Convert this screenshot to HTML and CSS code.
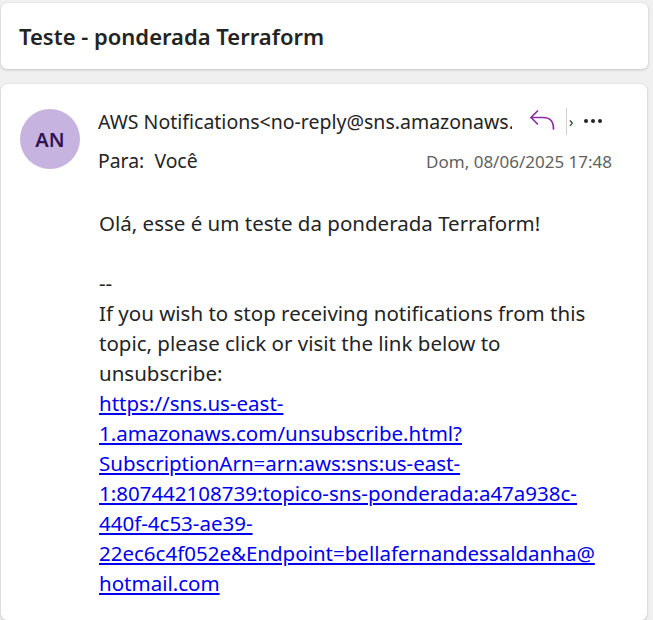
FILE: index.html
```html
<!DOCTYPE html>
<html lang="pt">
<head>
<meta charset="utf-8">
<link rel="stylesheet" href="styles.css">
</head>
<body>
<div class="page">
  <header class="subject-card">
    <h1 class="subject">Teste - ponderada Terraform</h1>
  </header>
  <article class="mail-card">
    <div class="mail-head">
      <div class="avatar">AN</div>
      <div class="meta">
        <div class="from-row">
          <div class="from">AWS Notifications&lt;no-reply@sns.amazonaws.com&gt;</div>
          <div class="actions">
            <button class="icon-btn reply" aria-label="Responder">
              <svg width="28" height="28" viewBox="0 0 28 28" fill="none" stroke="#8a2da5" stroke-width="1.7" stroke-linecap="round" stroke-linejoin="round"><path d="M9.5 4 L3 10.5 L9.5 17"/><path d="M3 10.5 H15 C22 10.5 25.5 14 25.5 22"/></svg>
            </button>
            <span class="divider"></span>
            <span class="chev">&rsaquo;</span>
            <button class="icon-btn more" aria-label="Mais">
              <svg width="20" height="6" viewBox="0 0 20 6" fill="#242424"><circle cx="3" cy="3" r="2"/><circle cx="10" cy="3" r="2"/><circle cx="17" cy="3" r="2"/></svg>
            </button>
          </div>
        </div>
        <div class="to-row">
          <span class="to">Para:&nbsp; Você</span>
          <span class="date">Dom, 08/06/2025 17:48</span>
        </div>
      </div>
    </div>
    <div class="mail-body">
      <p class="greeting">Olá, esse é um teste da ponderada Terraform!</p>
      <p class="footer-text">--<br>If you wish to stop receiving notifications from this topic, please click or visit the link below to unsubscribe:<br><a href="#">https://sns.us-east-1.amazonaws.com/unsubscribe.html?SubscriptionArn=arn:aws:sns:us-east-1:807442108739:topico-sns-ponderada:a47a938c-440f-4c53-ae39-22ec6c4f052e&amp;Endpoint=bellafernandessaldanha@<wbr>hotmail.com</a></p>
    </div>
  </article>
</div>
</body>
</html>
```
FILE: styles.css
```css
html, body {
  margin: 0;
  padding: 0;
  background: #f0f0f0;
}
body {
  font-family: "Noto Sans", "Open Sans", sans-serif;
  color: #242424;
  overflow: hidden;
  height: 620px;
}
.page {
  padding: 3px 5px 0 1px;
  display: flex;
  flex-direction: column;
  gap: 15px;
  height: 617px;
}
.subject-card {
  background: #fff;
  border-radius: 6px;
  box-shadow: 0 1px 3px rgba(0,0,0,0.18), 0 0 1px rgba(0,0,0,0.12);
  height: 66px;
  flex: none;
  display: flex;
  align-items: center;
  padding: 0 18px;
}
.subject {
  margin: 0;
  font-size: 22px;
  font-weight: 600;
  color: #242424;
}
.mail-card {
  flex: 1;
  background: #fff;
  border-radius: 6px;
  box-shadow: 0 1px 3px rgba(0,0,0,0.18), 0 0 1px rgba(0,0,0,0.12);
  padding: 22px 35px 0 19px;
  margin-right: 1px;
  overflow: hidden;
}
.mail-head {
  display: flex;
  gap: 18px;
}
.avatar {
  width: 60px;
  height: 60px;
  border-radius: 50%;
  background: #c7b3df;
  color: #2f1650;
  font-size: 20px;
  font-weight: 600;
  display: flex;
  align-items: center;
  justify-content: center;
  margin-top: 3px;
  flex: none;
}
.meta {
  flex: 1;
  min-width: 0;
}
.from-row {
  display: flex;
  align-items: center;
  height: 30px;
}
.from {
  font-size: 19.5px;
  white-space: nowrap;
  overflow: hidden;
  width: 414px;
  flex: none;
}
.actions {
  display: flex;
  align-items: center;
  margin-left: 16px;
}
.icon-btn {
  border: 0;
  background: none;
  padding: 0;
  display: flex;
  align-items: center;
  justify-content: center;
}
.reply {
  width: 28px;
  height: 28px;
}
.divider {
  width: 1px;
  height: 27px;
  background: #d1d1d1;
  margin-left: 10px;
}
.chev {
  font-size: 14px;
  margin-left: 2px;
  color: #242424;
}
.more {
  margin-left: 10px;
}
.to-row {
  display: flex;
  justify-content: space-between;
  align-items: baseline;
  margin-top: 11px;
}
.to {
  font-size: 19.4px;
}
.date {
  font-size: 17px;
  color: #616161;
}
.mail-body {
  padding: 0 7px 0 79px;
  font-size: 20.5px;
  line-height: 30px;
}
.mail-body p {
  margin: 0;
}
.greeting {
  margin-top: 34px !important;
  margin-bottom: 30px !important;
}
.footer-text a {
  color: #0000ee;
  text-decoration: underline;
}
```
